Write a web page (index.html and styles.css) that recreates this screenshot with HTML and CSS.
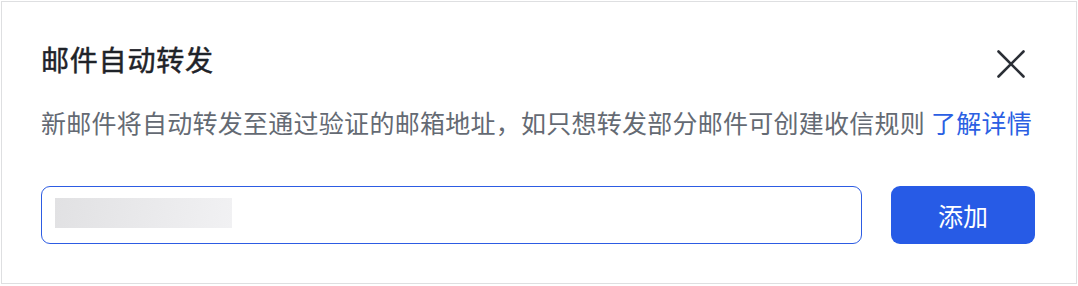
FILE: index.html
```html
<!DOCTYPE html>
<html lang="zh-CN">
<head>
  <meta charset="UTF-8" />
  <meta name="viewport" content="width=device-width, initial-scale=1.0"/>
  <title>邮件自动转发</title>
  <link rel="stylesheet" href="styles.css">
</head>
<body>
  <div class="dialog">
    <div class="dialog-header">
      <h1>邮件自动转发</h1>
      <button class="close-btn" aria-label="关闭">
        <svg width="28" height="28" viewBox="0 0 28 28">
          <path d="M1.5 1.5 L26.5 26.5 M26.5 1.5 L1.5 26.5" stroke="#2b2f36" stroke-width="2.6" stroke-linecap="round" fill="none"/>
        </svg>
      </button>
    </div>

    <p class="desc">新邮件将自动转发至通过验证的邮箱地址，如只想转发部分邮件可创建收信规则 <a href="#">了解详情</a></p>

    <div class="add-row">
      <div class="email-input"><span class="redacted"></span></div>
      <button class="add-btn">添加</button>
    </div>
  </div>
</body>
</html>
```

FILE: styles.css
```css
html, body {
  margin: 0;
  padding: 0;
  background-color: #fff;
}

body {
  font-family: "Noto Sans CJK SC", "Noto Sans", sans-serif;
  padding: 1px 1px 2px 1px;
}

.dialog {
  width: 1076px;
  height: 283px;
  box-sizing: border-box;
  border: 1px solid #dedfe1;
  padding: 37px 41px 0 39px;
  background-color: #fff;
}

.dialog-header {
  display: flex;
  justify-content: space-between;
  align-items: flex-start;
}

.dialog-header h1 {
  margin: 0;
  font-size: 28px;
  line-height: 40px;
  font-weight: 400;
  letter-spacing: 0.8px;
  -webkit-text-stroke: 0.5px #1f2329;
  color: #1f2329;
}

.close-btn {
  background: none;
  border: none;
  padding: 0;
  margin: 11px 10px 0 0;
  width: 28px;
  height: 28px;
  cursor: pointer;
}

.close-btn svg {
  display: block;
}

.desc {
  margin: 25px 0 0 0;
  font-size: 25px;
  line-height: 36px;
  letter-spacing: 0.26px;
  color: #646a73;
}

.desc a {
  color: #2b5fe3;
  text-decoration: none;
}

.add-row {
  display: flex;
  gap: 29px;
  margin-top: 46px;
}

.email-input {
  width: 821px;
  height: 58px;
  box-sizing: border-box;
  border: 1.5px solid #2d5ce3;
  border-radius: 9px;
  padding: 11px 0 0 13px;
}

.redacted {
  display: block;
  width: 177px;
  height: 30px;
  background: linear-gradient(100deg, #e1e1e3, #f1f1f3);
}

.add-btn {
  width: 144px;
  height: 58px;
  border: none;
  border-radius: 9px;
  background-color: #275be6;
  color: #fff;
  font-family: inherit;
  font-size: 25px;
  cursor: pointer;
}
```
